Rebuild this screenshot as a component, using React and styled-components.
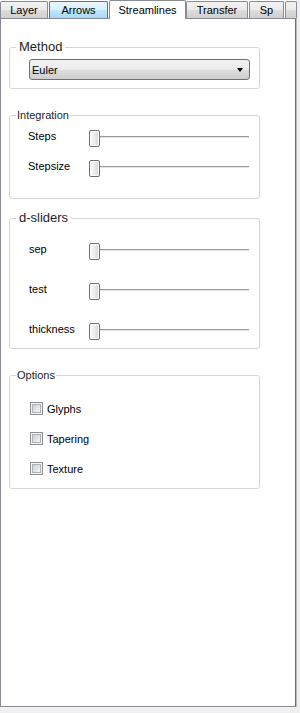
import React from "react";
import styled, { createGlobalStyle } from "styled-components";

const GlobalStyle = createGlobalStyle`
	html, body {
		margin: 0;
		padding: 0;
		background: #f0f0f0;
	}
	body {
		font-family: "Liberation Sans", Arial, sans-serif;
		font-size: 11px;
		color: #000;
	}
`;

const Window = styled.div`
	width: 300px;
	height: 713px;
	overflow: hidden;
	background: #f0f0f0;
`;

const TabBar = styled.div`
	display: flex;
	align-items: flex-end;
	height: 18px;
	background: #fff;
	width: 296px;
	position: relative;
	z-index: 1;
`;

const Tab = styled.div`
	box-sizing: border-box;
	flex: none;
	width: ${(p) => p.$w}px;
	margin-left: ${(p) => p.$ml || 0}px;
	height: ${(p) => (p.$active ? 19 : 17)}px;
	margin-bottom: ${(p) => (p.$active ? -1 : 0)}px;
	display: flex;
	align-items: center;
	justify-content: center;
	padding-top: ${(p) => (p.$active ? 0 : 1)}px;
	border: 1px solid ${(p) => (p.$hover ? "#3c7fb1" : "#898c95")};
	border-bottom: 0;
	border-radius: 2px 2px 0 0;
	background: ${(p) =>
		p.$active
			? "#fff"
			: p.$hover
			? "linear-gradient(#eaf6fd 0%, #d9f0fc 50%, #bee6fd 51%, #a7d9f5 100%)"
			: "linear-gradient(#f2f2f2 0%, #ebebeb 50%, #dddddd 51%, #cfcfcf 100%)"};
	white-space: nowrap;
	overflow: hidden;
	font-size: 11px;
	line-height: 13px;
`;

const Pane = styled.div`
	box-sizing: border-box;
	width: 296px;
	height: 689px;
	border: 1px solid #898c95;
	border-right-color: #6d6f74;
	box-shadow: 1px 0 0 #b9b9b9;
	background: #fff;
	padding: 0 0 0 8px;
	display: flex;
	flex-direction: column;
`;

const Group = styled.fieldset`
	box-sizing: border-box;
	width: 251px;
	margin: ${(p) => p.$mt}px 0 0 0;
	padding: ${(p) => p.$pt}px 0 ${(p) => p.$pb}px 6px;
	border: 1px solid #d5d5d5;
	border-radius: 3px;
	min-width: 0;
`;

const Legend = styled.legend`
	padding: 0 ${(p) => (p.$big ? 3 : 1)}px;
	font-size: ${(p) => (p.$big ? 13 : 11)}px;
	line-height: ${(p) => (p.$big ? 14 : 12)}px;
	color: #1e1e1e;
`;

const Select = styled.div`
	box-sizing: border-box;
	margin-left: 13px;
	width: 221px;
	height: 21px;
	border: 1px solid #707070;
	border-radius: 3px;
	background: linear-gradient(#f2f2f2 0%, #ebebeb 50%, #dddddd 51%, #cfcfcf 100%);
	display: flex;
	align-items: center;
	justify-content: space-between;
	padding: 0 6px 0 2px;
	font-size: 11px;
`;

const Arrow = styled.span`
	width: 0;
	height: 0;
	border-left: 3.5px solid transparent;
	border-right: 3.5px solid transparent;
	border-top: 4px solid #000;
	margin-top: 1px;
`;

const Rows = styled.div`
	display: flex;
	flex-direction: column;
	gap: ${(p) => p.$gap}px;
	margin-left: ${(p) => p.$ml}px;
`;

const SliderRow = styled.div`
	display: flex;
	align-items: flex-start;
	height: 17px;
`;

const SliderLabel = styled.span`
	width: ${(p) => p.$w}px;
	flex: none;
	line-height: 13px;
`;

const Track = styled.div`
	width: 160px;
	height: 17px;
	background:
		linear-gradient(#9a9a9a, #9a9a9a) 0 6px / 100% 1px no-repeat,
		linear-gradient(#e3e6e6, #e3e6e6) 0 7px / 100% 1px no-repeat;
`;

const Thumb = styled.div`
	box-sizing: border-box;
	width: 11px;
	height: 17px;
	border: 1px solid #707070;
	border-radius: 2px;
	background: linear-gradient(90deg, #fdfdfd 0%, #ececec 50%, #d6d6d6 100%);
	box-shadow: inset 0 0 0 1px #fff;
`;

const CheckRow = styled.label`
	display: flex;
	align-items: center;
	height: 13px;
	gap: 4px;
`;

const Box = styled.span`
	box-sizing: border-box;
	width: 13px;
	height: 13px;
	border: 1px solid #8e8f8f;
	background: #f4f4f4;
	padding: 1px;
	&::after {
		content: "";
		display: block;
		width: 100%;
		height: 100%;
		box-sizing: border-box;
		border: 1px solid #aeb3b9;
		background: linear-gradient(135deg, #cbcfd5 0%, #e4e4e4 55%, #f6f6f6 100%);
	}
`;

const tabs = [
	{ label: "Layer", w: 48 },
	{ label: "Arrows", w: 59, ml: 1, hover: true },
	{ label: "Streamlines", w: 77, ml: 1, active: true },
	{ label: "Transfer", w: 62, ml: 0 },
	{ label: "Sp", w: 35, ml: 1 },
	{ label: "", w: 12, ml: 1 },
];

function Slider({ label, w }) {
	return (
		<SliderRow>
			<SliderLabel $w={w}>{label}</SliderLabel>
			<Track>
				<Thumb />
			</Track>
		</SliderRow>
	);
}

function Check({ label }) {
	return (
		<CheckRow>
			<Box />
			<span>{label}</span>
		</CheckRow>
	);
}

export default function App() {
	return (
		<>
			<GlobalStyle />
			<Window>
				<TabBar>
					{tabs.map((t, i) => (
						<Tab key={i} $w={t.w} $ml={t.ml} $active={t.active} $hover={t.hover}>
							{t.label}
						</Tab>
					))}
				</TabBar>
				<Pane>
					<Group $mt={21} $pt={5} $pb={8}>
						<Legend $big>Method</Legend>
						<Select>
							<span>Euler</span>
							<Arrow />
						</Select>
					</Group>

					<Group $mt={20} $pt={9} $pb={21}>
						<Legend>Integration</Legend>
						<Rows $gap={13} $ml={12}>
							<Slider label="Steps" w={61} />
							<Slider label="Stepsize" w={61} />
						</Rows>
					</Group>

					<Group $mt={12} $pt={18} $pb={8}>
						<Legend $big>d-sliders</Legend>
						<Rows $gap={23} $ml={13}>
							<Slider label="sep" w={60} />
							<Slider label="test" w={60} />
							<Slider label="thickness" w={60} />
						</Rows>
					</Group>

					<Group $mt={20} $pt={21} $pb={13}>
						<Legend>Options</Legend>
						<Rows $gap={17} $ml={14}>
							<Check label="Glyphs" />
							<Check label="Tapering" />
							<Check label="Texture" />
						</Rows>
					</Group>
				</Pane>
			</Window>
		</>
	);
}
